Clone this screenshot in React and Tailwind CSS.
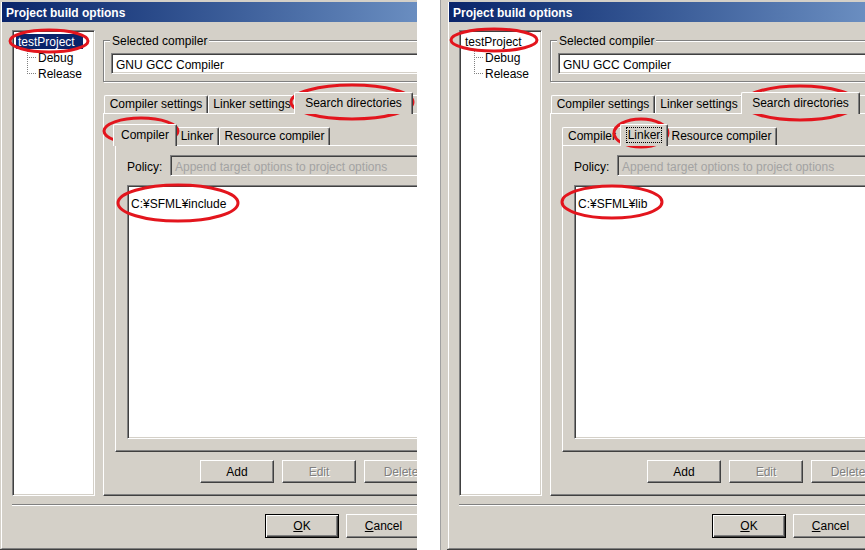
import React from "react";

const sunken =
  "border border-t-[#808080] border-l-[#808080] border-b-white border-r-white shadow-[inset_1px_1px_0_#404040,inset_-1px_-1px_0_#d4d0c8]";
const raised =
  "border border-t-white border-l-white border-b-[#404040] border-r-[#404040] shadow-[inset_-1px_-1px_0_#808080]";

function Tab({ label, w, selected, focus }) {
  if (selected) {
    return (
      <div
        className={`relative z-10 -mx-[2px] -mb-[1px] h-[22px] shrink-0 rounded-t-[2px] border-l border-t border-r border-l-white border-t-white border-r-[#404040] bg-[#d4d0c8] pt-[2px] text-center leading-[16px] whitespace-nowrap shadow-[inset_-1px_0_0_#808080] ${w}`}
      >
        {focus ? (
          <span className="border border-dotted border-black px-[1px]">{label}</span>
        ) : (
          label
        )}
      </div>
    );
  }
  return (
    <div
      className={`h-[18px] shrink-0 overflow-hidden rounded-t-[2px] border-l border-t border-r border-l-white border-t-white border-r-[#404040] text-center leading-[17px] whitespace-nowrap shadow-[inset_-1px_0_0_#808080] ${w}`}
    >
      {label}
    </div>
  );
}

function Btn({ children, disabled }) {
  return (
    <div
      className={`flex h-[23px] w-[74px] shrink-0 items-center justify-center ${raised} ${
        disabled ? "text-[#808080] [text-shadow:1px_1px_0_#fff]" : ""
      }`}
    >
      {children}
    </div>
  );
}

function Tree({ right }) {
  return (
    <div className={`h-[466px] w-[83px] shrink-0 bg-white pl-[3px] pt-[3px] ${sunken}`}>
      <div
        className={`flex h-[15px] w-[67px] items-center pl-[2px] pt-[1px] ${
          right ? "" : "bg-[#0a246a] text-white"
        }`}
      >
        testProject
      </div>
      <div className="flex h-[16px] items-center">
        <svg width="22" height="16" className="shrink-0" shapeRendering="crispEdges">
          <path d="M11.5 0V16M11 8.5H20" stroke="#808080" strokeDasharray="1 1" fill="none" />
        </svg>
        <span className="pt-[2px]">Debug</span>
      </div>
      <div className="flex h-[16px] items-center">
        <svg width="22" height="16" className="shrink-0" shapeRendering="crispEdges">
          <path d="M11.5 0V8M11 8.5H20" stroke="#808080" strokeDasharray="1 1" fill="none" />
        </svg>
        <span className="pt-[2px]">Release</span>
      </div>
    </div>
  );
}

function RightPane({ right }) {
  return (
    <div className="ml-[8px] w-[420px] shrink-0">
      <div className="relative mt-[10px] h-[42px] border border-[#808080] pl-[7px] pt-[12px] shadow-[inset_1px_1px_0_#fff,1px_1px_0_#fff]">
        <span className="absolute -top-[7px] left-[6px] bg-[#d4d0c8] px-[2px]">Selected compiler</span>
        <div className={`flex h-[21px] items-center bg-white pl-[4px] pt-[2px] ${sunken}`}>GNU GCC Compiler</div>
      </div>

      <div className="mt-[10px] flex h-[21px] items-end pl-[1px]">
        <Tab label="Compiler settings" w="w-[104px]" />
        <Tab label="Linker settings" w="w-[88px]" />
        <Tab label="Search directories" w="w-[119px]" selected />
        <Tab label="" w="w-[80px]" />
      </div>

      <div className={`h-[383px] pl-[11px] pt-[10px] ${raised}`}>
        <div className="flex h-[21px] items-end">
          {right ? (
            <>
              <Tab label="Compiler" w="w-[60px]" />
              <Tab label="Linker" w="w-[48px]" selected focus />
            </>
          ) : (
            <>
              <Tab label="Compiler" w="w-[64px]" selected />
              <Tab label="Linker" w="w-[44px]" />
            </>
          )}
          <Tab label="Resource compiler" w="w-[111px]" />
        </div>
        <div className={`h-[307px] pl-[11px] pt-[9px] ${raised}`}>
          <div className="flex h-[21px] items-center">
            <span className="w-[43px] shrink-0 pt-[2px]">Policy:</span>
            <div
              className={`flex h-[21px] flex-1 items-center whitespace-nowrap pl-[4px] pt-[2px] text-[#a3a3a3] ${sunken}`}
            >
              Append target options to project options
            </div>
          </div>
          <div className={`mt-[9px] h-[254px] bg-white pl-[3px] pt-[11px] ${sunken}`}>
            {right ? "C:¥SFML¥lib" : "C:¥SFML¥include"}
          </div>
        </div>
        <div className="mt-[8px] flex gap-[8px] pl-[85px]">
          <Btn>Add</Btn>
          <Btn disabled>Edit</Btn>
          <Btn disabled>Delete</Btn>
        </div>
      </div>
    </div>
  );
}

function Dialog({ right }) {
  return (
    <div className="flex h-[550px] w-[418px] shrink-0 flex-col overflow-hidden border-b border-[#404040] bg-[#d4d0c8] pl-[1px] pt-[2px]">
      <div className="flex min-h-0 flex-1 flex-col border-b border-l border-b-[#808080] border-l-white">
        <div className="flex h-[20px] w-[640px] shrink-0 items-center bg-linear-to-r from-[#0a246a] to-[#a6caf0] pl-[4px] pt-[2px] font-bold text-white">
          Project build options
        </div>
        <div className="flex shrink-0 pl-[10px] pt-[8px]">
          <Tree right={right} />
          <RightPane right={right} />
        </div>
        <div className="ml-[10px] mt-[8px] h-[2px] w-[600px] shrink-0 border-t border-b border-t-[#808080] border-b-white" />
        <div className="mt-[8px] flex shrink-0 gap-[7px] pl-[263px]">
          <div className="flex h-[24px] w-[74px] shrink-0 items-center justify-center border border-black shadow-[inset_1px_1px_0_#fff,inset_-1px_-1px_0_#404040,inset_-2px_-2px_0_#808080]">
            <span>
              <span className="underline">O</span>K
            </span>
          </div>
          <div className={`flex h-[24px] w-[75px] shrink-0 items-center justify-center ${raised}`}>
            <span>
              <span className="underline">C</span>ancel
            </span>
          </div>
        </div>
      </div>
    </div>
  );
}

export default function App() {
  const ellipses = [
    [49, 41, 39, 11],
    [352, 102, 61, 17],
    [141, 131, 37, 13],
    [178, 203, 60, 18],
    [494, 40, 43, 11],
    [800, 103, 57, 17],
    [641, 133, 27, 14],
    [612, 202, 50, 16],
  ];
  return (
    <div className="relative flex h-[550px] w-[865px] overflow-hidden bg-white font-['Liberation_Sans',Arial,sans-serif] text-[12px] leading-[14px] text-black">
      <div className="w-[417px] shrink-0 overflow-hidden">
        <Dialog />
      </div>
      <div className="w-[23px] shrink-0" />
      <div className="flex h-[550px] w-[425px] shrink-0 overflow-hidden border-l border-[#a0a0a0] bg-[#d4d0c8] pl-[6px]">
        <Dialog right />
      </div>
      <svg className="pointer-events-none absolute inset-0" width="865" height="550">
        {ellipses.map(([cx, cy, rx, ry], i) => (
          <ellipse key={i} cx={cx} cy={cy} rx={rx} ry={ry} fill="none" stroke="#e3151d" strokeWidth="3" />
        ))}
      </svg>
    </div>
  );
}
